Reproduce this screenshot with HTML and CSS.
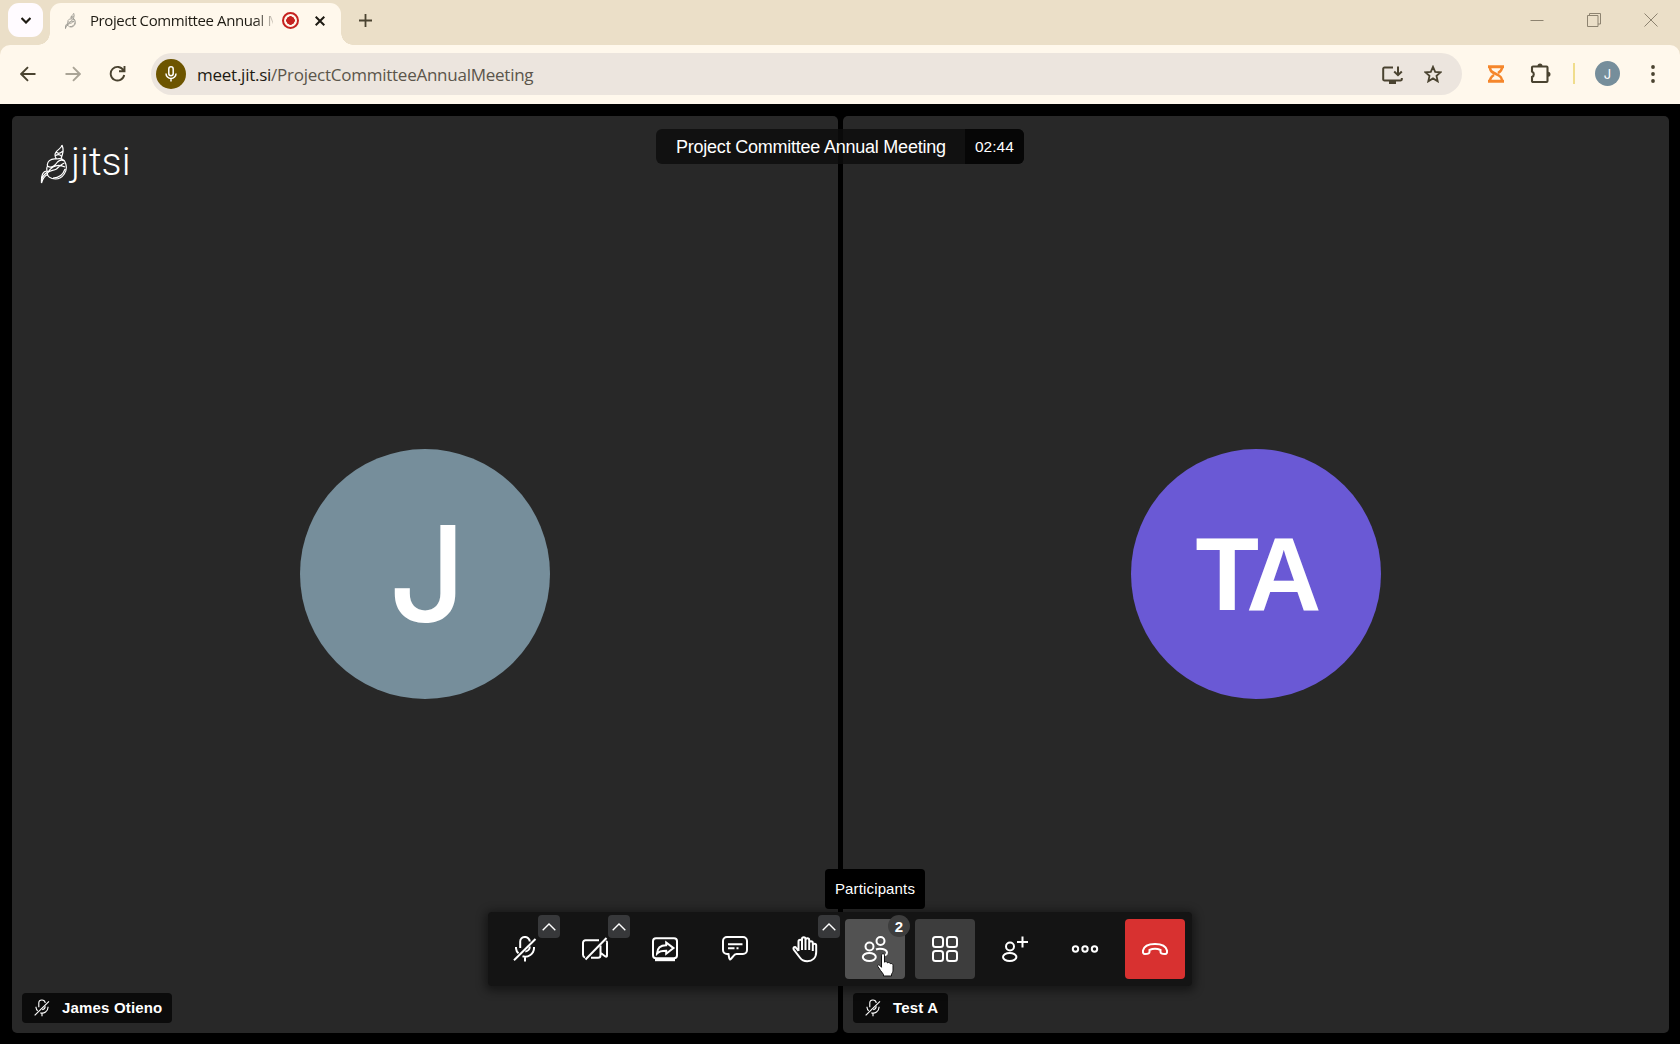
FILE: index.html
```html
<!DOCTYPE html>
<html lang="en">
<head>
<meta charset="utf-8">
<title>Project Committee Annual Meeting | Jitsi Meet</title>
<link rel="stylesheet" href="styles.css">
</head>
<body>
<svg class="defs" width="0" height="0">
  <defs>
    <symbol id="mic-off" viewBox="0 0 24 26">
      <path d="M7.200 12V6a4.800 4.800 0 0 1 9.600-.5M16.800 10.500a4.800 5 0 0 1-4.500 5M3 11v1.300a8.500 8 0 0 0 2.500 5M21 11v1.300a9 8.500 0 0 1-11.500 8M12 20.500v5"/>
      <path d="M1 24.200L22.500 3"/>
    </symbol>
    <symbol id="chevron" viewBox="0 0 14 8"><path d="M.7 7.300l6.300-6.300 6.300 6.300"/></symbol>
    <symbol id="sprite" viewBox="0 0 28 40">
      <path d="M22 1c0 4-7 5-7 10 0 1 .5 2.500 1.500 4M22 1c2 5 1 8-1 14M16 8c2 2 4 2 7-1M15 12c3-2 5-2 7 1M16.500 15c-6-1-10 3-9 7 4 3 8-1 10-4 2-2 5-2 7-1M16.500 15c4-1 8 0 9 4 3 8-3 16-10 16-5 0-9-3-8-6 2-3 6-2 9-4 3-3 5-5 8-6M8 28c5-7 11-8 17-5M13 34c6 0 10-3 12-9M7.500 22c-1 2-1 4 0 6M7 27c-4 0-6 4-5.500 12 1-4 3-7 6.500-9M1.500 36c1-4 3-6 6-8"/>
    </symbol>
  </defs>
</svg>

<header class="browser">
  <div class="tabstrip">
    <div class="tab-search"><svg width="10" height="7" viewBox="0 0 10 7"><path d="M0.500 1l4.500 4.500 4.500-4.500"/></svg></div>
    <div class="tab">
      <svg class="favicon"><use href="#sprite"/></svg>
      <span class="tab-title">Project Committee Annual Meeting</span>
      <span class="record"></span>
      <svg class="close" width="10" height="10" viewBox="0 0 10 10"><path d="M0.700 0.700l8.600 8.600M9.300 0.700l-8.600 8.600"/></svg>
    </div>
    <svg class="newtab" width="13" height="13" viewBox="0 0 13 13"><path d="M6.500 0v13M0 6.500h13"/></svg>
    <div class="window-buttons">
      <svg width="14" height="14" viewBox="0 0 14 14"><path d="M0.500 7.500h13"/></svg>
      <svg width="14" height="14" viewBox="0 0 14 14"><path d="M0.500 2.500h10.500v11H0.500zM2.500 2.500v-2h11v10.500h-2.500"/></svg>
      <svg width="14" height="14" viewBox="0 0 14 14"><path d="M0.500 0.500l13 13M13.500 0.500l-13 13"/></svg>
    </div>
  </div>
  <nav class="navbar">
    <svg class="nav-icon" width="16" height="16" viewBox="0 0 16 16"><path d="M15.500 8H1.500M8 1.200L1.200 8 8 14.800"/></svg>
    <svg class="nav-icon forward" width="16" height="16" viewBox="0 0 16 16"><path d="M0.500 8h14M8 1.200L14.800 8 8 14.800"/></svg>
    <svg class="nav-icon reload" width="17" height="17" viewBox="0 0 17 17"><path d="M14.500 5.500A6.800 6.800 0 1 0 15.200 10M15.500 1v5.300h-5.500"/></svg>
    <div class="address">
      <span class="mic-badge"><svg width="12" height="16" viewBox="0 0 12 16"><rect x="3.800" y="0.800" width="4.400" height="9" rx="2.200"/><path d="M1 7.500a5 5 0 0 0 10 0M6 12.500v3"/></svg></span>
      <span class="url">meet.jit.si<span>/ProjectCommitteeAnnualMeeting</span></span>
      <svg class="install" width="21" height="18" viewBox="0 0 21 18"><path d="M11 1.500H2.500a1.300 1.300 0 0 0-1.300 1.300v10.400a1.300 1.300 0 0 0 1.300 1.300h16a1.300 1.300 0 0 0 1.300-1.300V12M16 0.500v8M12.200 5.500L16 9.200l3.800-3.700"/><path class="foot" d="M7 14h7v4H7z"/></svg>
      <svg class="star" width="18" height="18" viewBox="0 0 18 18"><path d="M9 1.800l2.200 5 5.300.5-4 3.600 1.200 5.400L9 13.400l-4.700 2.900 1.200-5.400-4-3.600 5.300-.5z"/></svg>
    </div>
    <svg class="hourglass" width="16" height="18" viewBox="0 0 16 18"><path d="M0 1.700h16M0 16.300h16"/><path class="glass" d="M2 2c0 4 1.500 5 6 7s6 3.500 6 7M14 2c0 3-1.500 4.500-4 6M2 16c0-3 1.500-4.500 4-6"/></svg>
    <svg class="puzzle" width="21" height="21" viewBox="0 0 21 21"><path d="M3 3.500h13.500a1 1 0 0 1 1 1V18a1 1 0 0 1-1 1H3a1 1 0 0 1-1-1v-4a3 3 0 0 0 0-5.500v-4a1 1 0 0 1 1-1z"/><path class="knob" d="M7.500 3a2.500 2.500 0 0 1 5 0zM18 8.700a2.500 2.500 0 0 1 0 5z"/></svg>
    <span class="divider"></span>
    <span class="profile">J</span>
    <svg class="kebab" width="4" height="18" viewBox="0 0 4 18"><circle cx="2" cy="2" r="1.900"/><circle cx="2" cy="9" r="1.900"/><circle cx="2" cy="16" r="1.900"/></svg>
  </nav>
</header>

<main class="meeting">
  <section class="tile">
    <div class="avatar slate"><span>J</span></div>
    <div class="name"><svg><use href="#mic-off"/></svg><span>James Otieno</span></div>
    <div class="logo"><svg><use href="#sprite"/></svg><span>jitsi</span></div>
  </section>
  <section class="tile">
    <div class="avatar violet"><span>TA</span></div>
    <div class="name"><svg><use href="#mic-off"/></svg><span>Test A</span></div>
  </section>

  <div class="subject"><span class="subject-title">Project Committee Annual Meeting</span><span class="timer">02:44</span></div>

  <div class="toolbox">
    <div class="tool"><svg><use href="#mic-off"/></svg><span class="more"><svg><use href="#chevron"/></svg></span></div>
    <div class="tool"><svg viewBox="0 0 26 26"><path d="M17 4.300H3.500a2.500 2.500 0 0 0-2.500 2.500v12a3 3 0 0 0 2 2.800M9 21.700h7a2.500 2.500 0 0 0 2.500-2.500v-2.500l4.500 3.500q2 1.300 2-.8V6.500q0-1.500-1-.8M18.500 9.500v7"/><path d="M3.500 23.500L24.500 2"/></svg><span class="more"><svg><use href="#chevron"/></svg></span></div>
    <div class="tool"><svg viewBox="0 0 26 26"><rect x="1" y="2.200" width="24" height="20" rx="3"/><path d="M3 23.800h20" stroke-width="2.800"/><path d="M5 17.500c.3-6 3.500-8.200 9.200-8.200V6.500l7.300 5.600-7.300 5.600v-3c-4 0-7 .3-9.200 2.800z"/></svg></div>
    <div class="tool"><svg viewBox="0 0 26 26"><path d="M5 1h16a4 4 0 0 1 4 4v9a4 4 0 0 1-4 4h-6.500c-3 0-4 4.500-6.500 5.500-1.300-.5-1-3.500-1.500-5.500H5a4 4 0 0 1-4-4V5a4 4 0 0 1 4-4zM6 8.300h14.500M6 12.300h6.500M14.500 12.300h2"/></svg></div>
    <div class="tool"><svg viewBox="0 0 26 26"><path d="M6.500 15V5.500c0-2.500 3.500-2.500 3.500 0V14M10 12V3c0-2.500 3.500-2.500 3.500 0v11M13.500 4c0-2.500 3.700-2.500 3.700 0v10M17.200 7c0-2.500 3.600-2.500 3.600 0v8M20.800 9.500c0-2.500 3.400-2.500 3.400 0v6.500c0 6-4 9.200-9 9.200-3 0-5.500-1-7-3.200L1.700 13.500c-1-2.500 1.500-3 2.500-1.500L6.500 15"/></svg><span class="more"><svg><use href="#chevron"/></svg></span></div>
    <div class="tool hovered"><svg viewBox="0 0 26 26"><circle cx="7.500" cy="10.500" r="4"/><circle cx="18.500" cy="5" r="4"/><ellipse cx="7.300" cy="21" rx="6.500" ry="4"/><path d="M14 13.500c3.500-1.600 10.800-.8 11 3.300 0 1-.8 2-2 2.700"/></svg><span class="count">2</span><span class="tooltip">Participants</span>
      <svg class="cursor" viewBox="0 0 17 24"><path d="M4.500 2.200c0-2 3-2 3 0v7c1-1 2.800-.7 3 .7 1-.8 2.600-.4 2.800.8 1.300-.5 2.700.2 2.700 1.700v4.800c0 2-1 3-1.500 4v1.800H6.500v-1.500C4.500 19 2.500 16 .8 13.500c-.8-1.500.8-2.300 2-1.200l1.700 2z"/></svg></div>
    <div class="tool toggled"><svg viewBox="0 0 26 26"><rect x="1" y="1" width="10" height="10" rx="2.500"/><rect x="15" y="1" width="10" height="10" rx="2.500"/><rect x="1" y="15" width="10" height="10" rx="2.500"/><rect x="15" y="15" width="10" height="10" rx="2.500"/></svg></div>
    <div class="tool"><svg viewBox="0 0 26 26"><circle cx="8" cy="10.500" r="4"/><ellipse cx="7.700" cy="21" rx="6.700" ry="4"/><path d="M20.500 .5v11M15 6h11"/></svg></div>
    <div class="tool"><svg viewBox="0 0 26 26"><circle cx="3.500" cy="13" r="2.700"/><circle cx="13" cy="13" r="2.700"/><circle cx="22.500" cy="13" r="2.700"/></svg></div>
    <div class="tool hangup"><svg viewBox="0 0 26 26"><path d="M1 14.500C2 10 7 8 13 8s11 2 12 6.500c.3 2.500-.5 3.500-2 3.500-2 0-4.500 0-4.500-2v-2c-3-1.300-8-1.300-11 0v2c0 2-2.500 2-4.500 2-1.500 0-2.300-1-2-3.500z"/></svg></div>
  </div>
</main>
</body>
</html>
```
FILE: styles.css
```css
* { box-sizing: border-box; }
body { margin: 0; width: 1680px; height: 1044px; overflow: hidden; display: flex; flex-direction: column; background: #000; font-family: "Liberation Sans", Arial, sans-serif; }
svg { display: block; flex: none; fill: none; stroke: currentColor; }
.defs { position: absolute; }

.browser { background: #ebdfc8; color: #4a4330; font-family: "Open Sans", "Noto Sans", sans-serif; }
.tabstrip { height: 45px; display: flex; align-items: center; padding: 0 22px 5px 8px; }
.tab-search { width: 35px; height: 34px; border-radius: 11px; background: #fffbff; display: grid; place-items: center; color: #1e1b13; stroke-width: 2.200; }
.tab { position: relative; align-self: flex-start; margin: 3px 0 0 7px; width: 291px; height: 42px; padding: 0 15px 7px 14px; border-radius: 11px 11px 0 0; background: #fff8ec; display: flex; align-items: center; flex: none; }
.tab::before, .tab::after { content: ""; position: absolute; bottom: 0; width: 12px; height: 12px; }
.tab::before { left: -12px; background: radial-gradient(circle at 0 0, transparent 11.500px, #fff8ec 12px); }
.tab::after { right: -12px; background: radial-gradient(circle at 100% 0, transparent 11.500px, #fff8ec 12px); }
.favicon { width: 13px; height: 16px; stroke-width: 1.800; color: #8d8b84; }
.tab-title { width: 183px; margin: 0 0 2px 13px; overflow: hidden; white-space: nowrap; font-size: 15px; letter-spacing: -0.400px; color: #1e1b13; -webkit-mask-image: linear-gradient(90deg, #000 165px, transparent 187px); }
.record { width: 17px; height: 17px; margin-left: 8.500px; border: 2px solid #c5221f; border-radius: 50%; background: radial-gradient(circle, #c5221f 4px, transparent 4.500px); flex: none; }
.close { margin-left: 16px; color: #1e1b13; stroke-width: 2; }
.newtab { margin-left: 18px; stroke-width: 1.800; }
.window-buttons { display: flex; gap: 43px; margin-left: auto; padding-bottom: 1px; color: #8d8370; stroke-width: 1; }

.navbar { height: 59px; padding: 0 25px 2px 20px; display: flex; align-items: center; background: #fff8ec; border-radius: 10px 10px 0 0; }
.nav-icon { stroke-width: 1.900; margin-right: 29px; }
.nav-icon.reload { margin-left: -1px; }
.forward { color: #aaa496; }
.address { width: 1311px; height: 42px; margin-left: -4px; padding: 0 20px 0 5px; border-radius: 21px; background: #ece5de; display: flex; align-items: center; flex: none; }
.mic-badge { width: 30px; height: 30px; border-radius: 50%; background: #6d5500; color: #fff; display: grid; place-items: center; stroke-width: 1.500; }
.url { margin: 2px 0 0 11px; font-size: 17px; letter-spacing: -0.250px; color: #1e1b13; white-space: nowrap; }
.url span { color: #5b554b; }
.install { margin: 2px 0 0 auto; stroke-width: 2; color: #4a4330; }
.foot, .knob { fill: currentColor; stroke: none; }
.star { margin-left: 21px; stroke-width: 1.800; }
.hourglass { margin: 1px 0 0 26px; color: #f5862b; stroke-width: 3; }
.glass { stroke-width: 2.600; }
.puzzle { margin-left: 26px; stroke-width: 2.100; }
.divider { width: 2px; height: 21px; margin-left: 22px; background: #f0dd8c; }
.profile { width: 25px; height: 25px; margin-left: 20px; border-radius: 50%; background: #768e9b; color: #fff; display: grid; place-items: center; font: 13px Inter, sans-serif; }
.kebab { margin-left: 31px; fill: currentColor; stroke: none; }

.meeting { position: relative; flex: 1; display: grid; grid-template-columns: 826px 826px; gap: 5px; padding: 12px 11px 11px 12px; color: #fff; }
.tile { position: relative; padding-bottom: 1px; border-radius: 5px; background: #282828; display: grid; place-items: center; }
.avatar { width: 250px; height: 250px; border-radius: 50%; display: grid; place-items: center; margin-bottom: 1px; }
.slate { padding: 0 0 2px 5px; background: #768e9b; font: 500 134px/1 Inter, sans-serif; }
.violet { background: #6a59d5; font: bold 104px/1 "Liberation Sans", Arial, sans-serif; letter-spacing: -5px; }
.name { position: absolute; left: 10px; bottom: 10px; height: 30px; padding: 0 10px 2px 12px; border-radius: 4px; background: #0b0b0b; display: flex; align-items: center; gap: 12px; font: bold 15px "Liberation Sans", Arial, sans-serif; letter-spacing: 0.170px; white-space: nowrap; }
.name svg { width: 16px; height: 18px; margin-top: 2px; stroke-width: 1.700; }
.logo { position: absolute; left: 28px; top: 28px; display: flex; align-items: flex-start; }
.logo svg { width: 28px; height: 40px; stroke-width: 1.200; }
.logo span { margin: -5px 0 0 3px; font: 300 39.500px/46px Roboto, sans-serif; }

.subject { position: absolute; left: 656px; top: 25px; height: 35px; display: flex; border-radius: 6px; overflow: hidden; align-items: stretch; background: linear-gradient(90deg, #111 182px, #0a0a0a 182px 187px, #111 187px); }
.subject > span { display: flex; align-items: center; }
.subject-title { width: 309px; padding: 1px 0 0 20px; font-size: 18px; letter-spacing: -0.230px; white-space: nowrap; }
.subject .timer { width: 59px; padding-left: 10px; background: #060606; font-size: 15.500px; }

.toolbox { position: absolute; left: 488px; top: 808px; height: 74px; padding: 7px; display: flex; gap: 10px; background: #141414; border-radius: 4px; box-shadow: 0 2px 10px 3px rgba(0, 0, 0, .45); }
.tool { position: relative; width: 60px; height: 60px; border-radius: 4px; display: grid; place-items: center; }
.tool > svg:first-child { width: 26px; height: 26px; overflow: visible; stroke-width: 2; }
.hovered { background: #525252; }
.toggled { background: #3d3d3d; }
.hangup { background: #d83130; }
.more { position: absolute; left: 43px; top: -4px; width: 22px; height: 23px; border-radius: 4px; background: #37383a; display: grid; place-items: center; }
.more svg { width: 14px; height: 8px; stroke-width: 1.400; }
.count { position: absolute; left: 43px; top: -4px; width: 22px; height: 22px; border-radius: 50%; background: #3d3d3d; display: grid; place-items: center; font: bold 15px "Liberation Sans", Arial, sans-serif; }
.tooltip { position: absolute; left: -20px; top: -50px; width: 100px; height: 40px; padding-bottom: 2px; border-radius: 4px; background: #000; display: grid; place-items: center; font-size: 15px; letter-spacing: 0.150px; }
.tool > svg.cursor { position: absolute; left: 32px; top: 34px; width: 17px; height: 24px; fill: #fff; stroke: #111; stroke-width: 1; overflow: visible; }
```
